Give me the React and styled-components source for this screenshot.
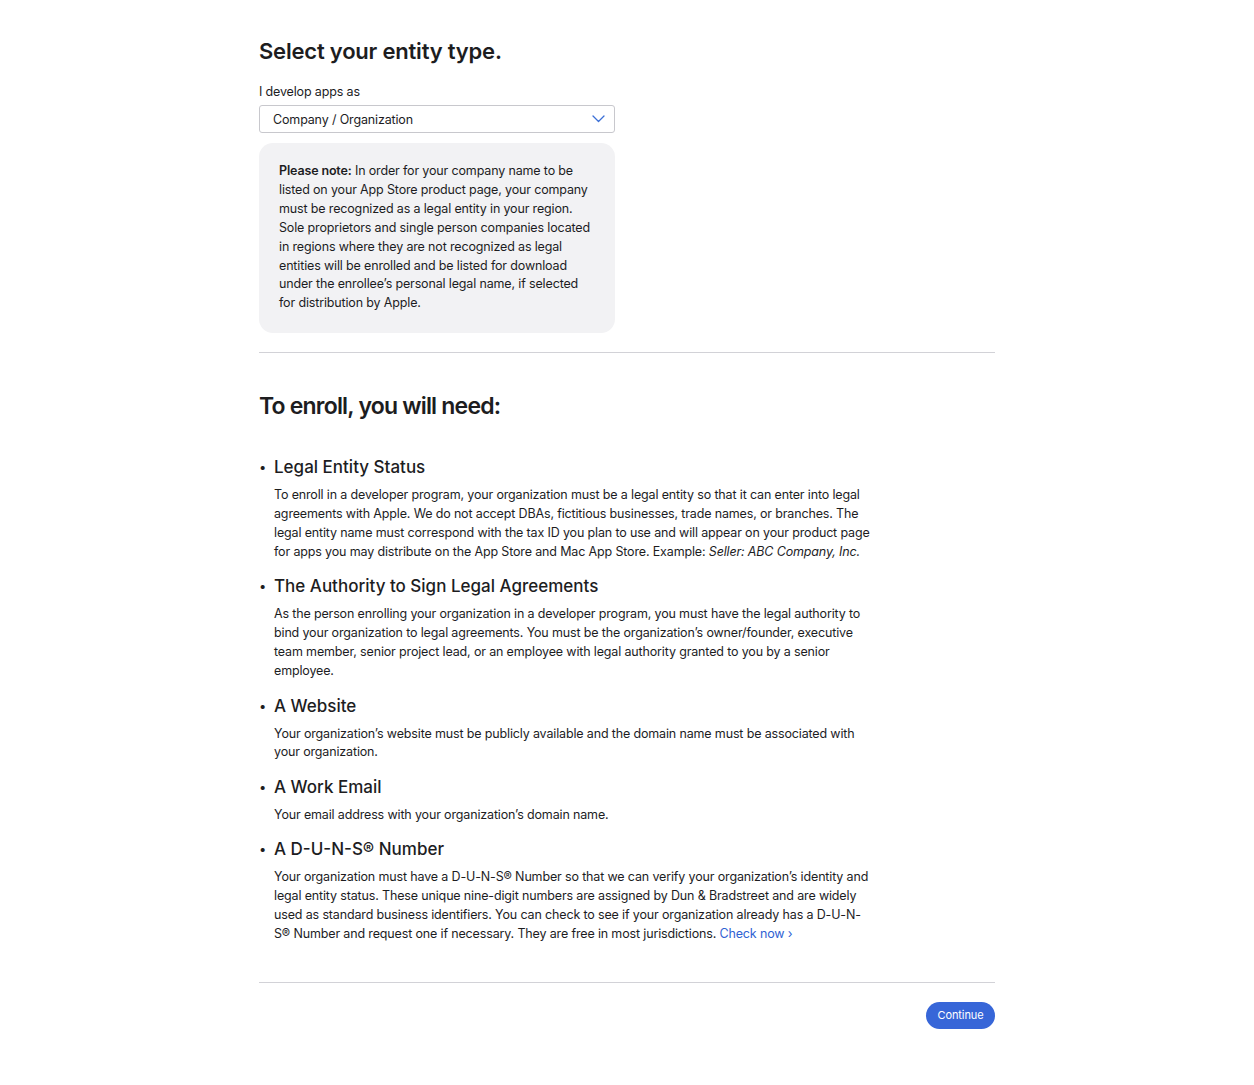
import React from "react";
import styled, { createGlobalStyle } from "styled-components";

const GlobalStyle = createGlobalStyle`
    body {
        margin: 0;
        background: #ffffff;
        color: #1d1d1f;
        font-family: Inter, "Noto Sans", sans-serif;
        -webkit-font-smoothing: antialiased;
    }
`;

const Page = styled.div`
    width: 736px;
    margin: 0 auto;
    padding: 36px 0 56px;
`;

const Title = styled.h1`
    margin: 0 0 17px;
    font-size: 22px;
    line-height: 30px;
    font-weight: 600;
    letter-spacing: -0.2px;
`;

const Label = styled.label`
    display: block;
    font-size: 12.5px;
    line-height: 18px;
    letter-spacing: -0.15px;
    margin-bottom: 4px;
`;

const SelectBox = styled.div`
    width: 356px;
    height: 28px;
    box-sizing: border-box;
    border: 1px solid #c8c8cd;
    border-radius: 3px;
    padding: 0 9px 0 13px;
    display: flex;
    align-items: center;
    justify-content: space-between;
    font-size: 12.5px;
    letter-spacing: -0.15px;
`;

const Chevron = () => (
    <svg width="13" height="8" viewBox="0 0 13 8" fill="none">
        <path d="M1 1l5.5 5.5L12 1" stroke="#3b6fd6" strokeWidth="1.3" strokeLinecap="round" strokeLinejoin="round" />
    </svg>
);

const Note = styled.div`
    width: 356px;
    box-sizing: border-box;
    margin-top: 10px;
    background: #f2f2f4;
    border-radius: 14px;
    padding: 19px 20px 20px;
    font-size: 12.5px;
    line-height: 18.9px;
    letter-spacing: -0.15px;
    b { font-weight: 600; }
`;

const Rule = styled.hr`
    border: 0;
    border-top: 1px solid #d2d2d7;
    margin: ${(p) => p.top}px 0 0;
`;

const SectionTitle = styled.h2`
    margin: 38px 0 35px;
    font-size: 23px;
    line-height: 30px;
    font-weight: 600;
    letter-spacing: -0.8px;
`;

const List = styled.ul`
    list-style: none;
    margin: 0;
    padding: 0;
`;

const Item = styled.li`
    position: relative;
    padding-left: 15px;
    margin-bottom: 13.5px;
    &::before {
        content: "•";
        position: absolute;
        left: 0;
        top: 1px;
        font-size: 13px;
        line-height: 20px;
    }
`;

const ItemTitle = styled.h3`
    margin: 0 0 8px;
    font-size: 17px;
    line-height: 22px;
    font-weight: 500;
    letter-spacing: 0;
`;

const ItemText = styled.p`
    margin: 0;
    max-width: 600px;
    font-size: 12.5px;
    line-height: 18.9px;
    letter-spacing: -0.15px;
`;

const Link = styled.a`
    color: #2f62d3;
    text-decoration: none;
`;

const Footer = styled.div`
    display: flex;
    justify-content: flex-end;
    padding-top: 19px;
`;

const Button = styled.button`
    all: unset;
    background: #3766d8;
    color: #ffffff;
    font-size: 11px;
    letter-spacing: -0.1px;
    height: 27px;
    padding: 0 11.5px;
    border-radius: 14px;
    display: flex;
    align-items: center;
    cursor: pointer;
`;

const items = [
    {
        title: "Legal Entity Status",
        text: (
            <>
                To enroll in a developer program, your organization must be a legal entity so that it can enter into legal
                agreements with Apple. We do not accept DBAs, fictitious businesses, trade names, or branches. The legal
                entity name must correspond with the tax ID you plan to use and will appear on your product page for apps
                you may distribute on the App Store and Mac App Store. Example: <i>Seller: ABC Company, Inc.</i>
            </>
        ),
    },
    {
        title: "The Authority to Sign Legal Agreements",
        text: "As the person enrolling your organization in a developer program, you must have the legal authority to bind your organization to legal agreements. You must be the organization’s owner/founder, executive team member, senior project lead, or an employee with legal authority granted to you by a senior employee.",
    },
    {
        title: "A Website",
        text: "Your organization’s website must be publicly available and the domain name must be associated with your organization.",
    },
    {
        title: "A Work Email",
        text: "Your email address with your organization’s domain name.",
    },
    {
        title: "A D-U-N-S® Number",
        text: (
            <>
                Your organization must have a D-U-N-S® Number so that we can verify your organization’s identity and legal
                entity status. These unique nine-digit numbers are assigned by Dun &amp; Bradstreet and are widely used as
                standard business identifiers. You can check to see if your organization already has a D-U-N-S® Number
                and request one if necessary. They are free in most jurisdictions. <Link href="#">Check now ›</Link>
            </>
        ),
    },
];

const App = () => (
    <>
        <GlobalStyle />
        <Page>
            <Title>Select your entity type.</Title>
            <Label>I develop apps as</Label>
            <SelectBox>
                <span>Company / Organization</span>
                <Chevron />
            </SelectBox>
            <Note>
                <b>Please note:</b> In order for your company name to be listed on your App Store product page, your
                company must be recognized as a legal entity in your region. Sole proprietors and single person companies
                located in regions where they are not recognized as legal entities will be enrolled and be listed for
                download under the enrollee’s personal legal name, if selected for distribution by Apple.
            </Note>
            <Rule top={19} />
            <SectionTitle>To enroll, you will need:</SectionTitle>
            <List>
                {items.map((item) => (
                    <Item key={item.title}>
                        <ItemTitle>{item.title}</ItemTitle>
                        <ItemText>{item.text}</ItemText>
                    </Item>
                ))}
            </List>
            <Rule top={38} />
            <Footer>
                <Button>Continue</Button>
            </Footer>
        </Page>
    </>
);

export default App;
